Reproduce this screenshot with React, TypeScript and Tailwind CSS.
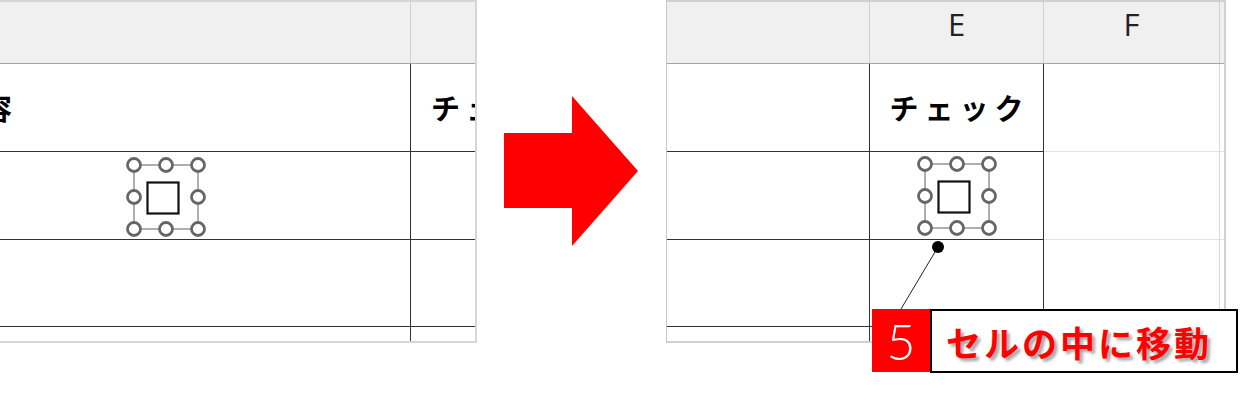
import React from 'react';

const JP = "font-['Noto_Sans_CJK_JP','Noto_Sans_CJK_SC',sans-serif]";

function CheckControl() {
    // form checkbox with its 8 selection handles
    const pts = [8, 40, 72];
    return (
        <svg width="80" height="80" viewBox="0 0 80 80">
            <rect x="8" y="8" width="64" height="64" fill="none" stroke="#7a7a7a" strokeWidth="1.2" />
            <rect x="21.5" y="25.5" width="31" height="31" fill="white" stroke="#111" strokeWidth="2.2" />
            {pts.map(y => pts.map(x => (x === 40 && y === 40) ? null : (
                <circle key={`${x}-${y}`} cx={x} cy={y} r="6.5" fill="white" stroke="#666" strokeWidth="2.8" />
            )))}
        </svg>
    );
}

function LeftSheet() {
    return (
        <div className="relative w-[477px] h-[343px] shrink-0 overflow-hidden border-t-2 border-r-2 border-b-2 border-[#d6d6d6]">
            {/* column header */}
            <div className="flex h-[62px] bg-[#f0f0f0] border-b border-[#a6a6a6]">
                <div className="w-[411px] shrink-0 border-r border-[#d0d0d0]" />
                <div className="w-[174px] shrink-0" />
            </div>
            <div className="flex h-[88px]">
                <div className="w-[411px] shrink-0 border-r border-b border-[#333] flex items-center">
                    <span className={`${JP} text-[29px] font-bold tracking-[6px] text-black leading-none -ml-[52px]`}>内容</span>
                </div>
                <div className="w-[174px] shrink-0 border-b border-[#333] flex items-center justify-center pl-[6px]">
                    <span className={`${JP} text-[29px] font-bold tracking-[6px] text-black leading-none whitespace-nowrap`}>チェック</span>
                </div>
            </div>
            <div className="flex h-[88px]">
                <div className="w-[411px] shrink-0 border-r border-b border-[#333]" />
                <div className="w-[174px] shrink-0 border-b border-[#333]" />
            </div>
            <div className="flex h-[87px]">
                <div className="w-[411px] shrink-0 border-r border-b border-[#333]" />
                <div className="w-[174px] shrink-0 border-b border-[#333]" />
            </div>
            <div className="flex h-[14px]">
                <div className="w-[411px] shrink-0 border-r border-[#333]" />
                <div className="w-[174px] shrink-0" />
            </div>
            <div className="absolute left-[126px] top-[155px]">
                <CheckControl />
            </div>
        </div>
    );
}

function Arrow() {
    return (
        <div className="w-[189px] h-[343px] shrink-0">
            <svg width="189" height="343" viewBox="0 0 189 343">
                <polygon points="27,133 95,133 95,96 161,171 95,246 95,208 27,208" fill="#ff0000" />
            </svg>
        </div>
    );
}

function RightSheet() {
    return (
        <div className="w-[560px] h-[343px] shrink-0 overflow-hidden border-l border-t-2 border-r-2 border-b-2 border-[#d0d0d0] border-l-[#c8c8c8]">
            <div className="flex h-[62px] bg-[#f0f0f0] border-b border-[#a6a6a6] font-['Open_Sans',sans-serif] text-[31px] text-[#222] leading-none">
                <div className="w-[203px] shrink-0 border-r border-[#d0d0d0]" />
                <div className="w-[174px] shrink-0 border-r border-[#d0d0d0] flex justify-center pt-[7px]">E</div>
                <div className="w-[176px] shrink-0 border-r border-[#d0d0d0] flex justify-center pt-[7px]">F</div>
                <div className="flex-1" />
            </div>
            <div className="flex h-[88px]">
                <div className="w-[203px] shrink-0 border-r border-b border-[#333]" />
                <div className="w-[174px] shrink-0 border-r border-b border-[#333] flex items-center justify-center pl-[6px]">
                    <span className={`${JP} text-[29px] font-bold tracking-[6px] text-black leading-none whitespace-nowrap`}>チェック</span>
                </div>
                <div className="w-[176px] shrink-0 border-r border-b border-[#e2e2e2] border-r-[#d8d8d8]" />
                <div className="flex-1 border-b border-[#e2e2e2]" />
            </div>
            <div className="flex h-[88px]">
                <div className="w-[203px] shrink-0 border-r border-b border-[#333]" />
                <div className="w-[174px] shrink-0 border-r border-b border-[#333] flex items-center justify-center">
                    <CheckControl />
                </div>
                <div className="w-[176px] shrink-0 border-r border-b border-[#e2e2e2] border-r-[#d8d8d8]" />
                <div className="flex-1 border-b border-[#e2e2e2]" />
            </div>
            <div className="flex h-[87px]">
                <div className="w-[203px] shrink-0 border-r border-b border-[#333]" />
                <div className="w-[174px] shrink-0 border-r border-b border-[#333]" />
                <div className="w-[176px] shrink-0 border-r border-b border-[#e2e2e2] border-r-[#d8d8d8]" />
                <div className="flex-1 border-b border-[#e2e2e2]" />
            </div>
            <div className="flex h-[14px]">
                <div className="w-[203px] shrink-0 border-r border-[#333]" />
                <div className="w-[174px] shrink-0 border-r border-[#333]" />
                <div className="w-[176px] shrink-0 border-r border-[#d8d8d8]" />
                <div className="flex-1" />
            </div>
        </div>
    );
}

function Callout() {
    return (
        <>
            <svg className="absolute left-[895px] top-[238px]" width="50" height="75" viewBox="0 0 50 75">
                <line x1="43" y1="9" x2="6" y2="71" stroke="#222" strokeWidth="1" />
                <circle cx="43" cy="9" r="6" fill="#000" />
            </svg>
            <div className="absolute left-[872px] top-[309px] flex items-start">
                <div className="w-[58px] h-[63px] bg-[#ff0000] text-white flex items-center justify-center font-['Lato',sans-serif] font-light text-[50px] leading-none">5</div>
                <div className="w-[308px] h-[64px] bg-white border-2 border-black flex items-center pl-[14px]">
                    <span className={`${JP} text-[35px] font-bold tracking-[3px] text-[#ff0000] leading-none whitespace-nowrap [text-shadow:3px_3px_3px_rgba(0,0,0,0.35)]`}>セルの中に移動</span>
                </div>
            </div>
        </>
    );
}

export default function App() {
    return (
        <div className="relative w-[1240px] h-[402px] bg-white overflow-hidden flex items-start">
            <LeftSheet />
            <Arrow />
            <RightSheet />
            <Callout />
        </div>
    );
}
